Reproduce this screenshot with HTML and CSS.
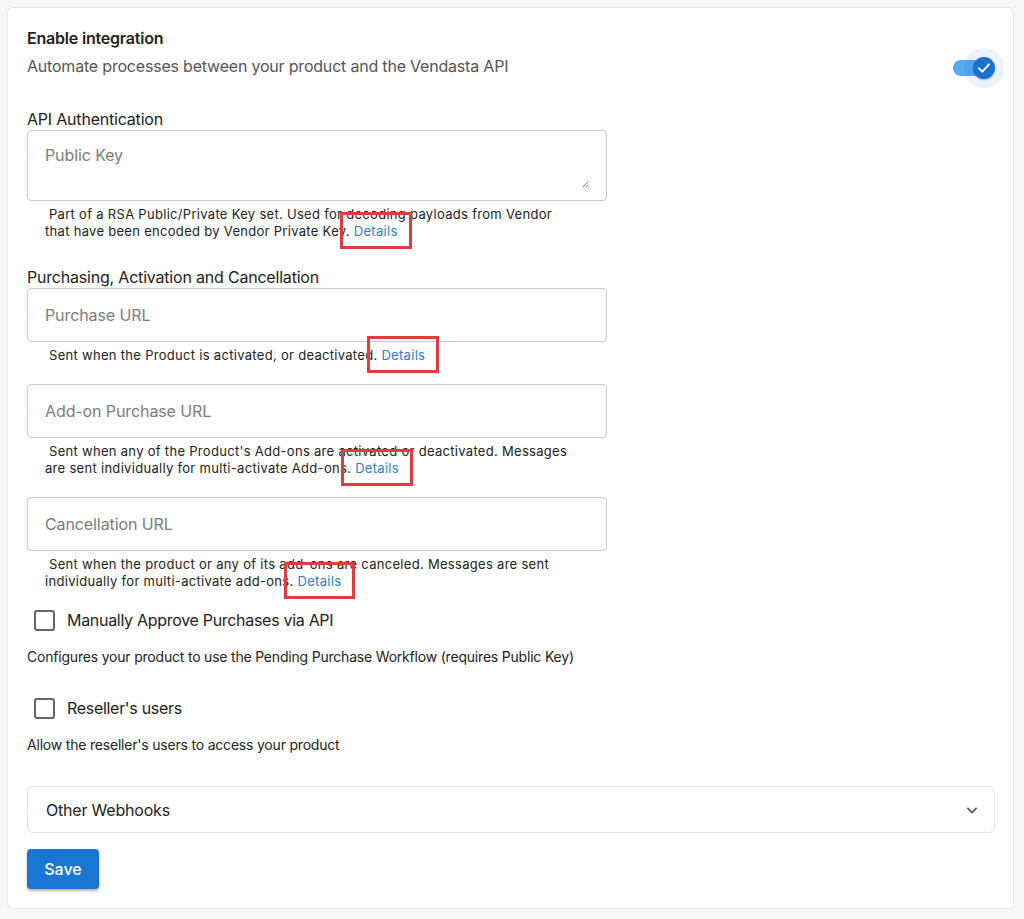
FILE: index.html
```html
<!DOCTYPE html>
<html lang="en">
<head>
    <meta charset="UTF-8">
    <meta name="viewport" content="width=device-width, initial-scale=1.0">
    <title>Integration Settings</title>
    <link rel="stylesheet" href="styles.css">
</head>
<body>
    <div class="card">
        <div class="header-row">
            <div>
                <div class="title">Enable integration</div>
                <div class="subtitle">Automate processes between your product and the Vendasta API</div>
            </div>
            <label class="toggle">
                <span class="track"></span>
                <span class="halo"></span>
                <span class="thumb">
                    <svg viewBox="0 0 24 24" width="16" height="16"><path d="M4.5 12.5l5 5 10-11" fill="none" stroke="#fff" stroke-width="3" stroke-linecap="round" stroke-linejoin="round"/></svg>
                </span>
            </label>
        </div>

        <h3 class="section-title first">API Authentication</h3>
        <div class="field textarea-field">
            <textarea placeholder="Public Key"></textarea>
            <svg class="resize" viewBox="0 0 10 10" width="9" height="9"><path d="M9 3L3 9M9 6.5L6.5 9" stroke="#666" stroke-width="1.1" fill="none"/></svg>
        </div>
        <p class="hint"><span class="lead"></span>Part of a RSA Public/Private Key set. Used for decoding payloads from Vendor that have been encoded by Vendor Private Key. <a href="#" class="details marked">Details</a></p>

        <h3 class="section-title">Purchasing, Activation and Cancellation</h3>
        <div class="field">
            <input type="text" placeholder="Purchase URL">
        </div>
        <p class="hint"><span class="lead"></span>Sent when the Product is activated, or deactivated. <a href="#" class="details marked">Details</a></p>

        <div class="field spaced">
            <input type="text" placeholder="Add-on Purchase URL">
        </div>
        <p class="hint"><span class="lead"></span>Sent when any of the Product's Add-ons are activated or deactivated. Messages are sent individually for multi-activate Add-ons. <a href="#" class="details marked">Details</a></p>

        <div class="field spaced">
            <input type="text" placeholder="Cancellation URL">
        </div>
        <p class="hint"><span class="lead"></span>Sent when the product or any of its add-ons are canceled. Messages are sent individually for multi-activate add-ons. <a href="#" class="details marked">Details</a></p>

        <label class="check-row first-check">
            <span class="box"></span>
            <span>Manually Approve Purchases via API</span>
        </label>
        <p class="check-desc">Configures your product to use the Pending Purchase Workflow (requires Public Key)</p>

        <label class="check-row">
            <span class="box"></span>
            <span>Reseller's users</span>
        </label>
        <p class="check-desc">Allow the reseller's users to access your product</p>

        <div class="panel">
            <span>Other Webhooks</span>
            <svg viewBox="0 0 24 24" width="20" height="20"><path d="M6.5 9.5l5.5 5.5 5.5-5.5" fill="none" stroke="#555" stroke-width="2"/></svg>
        </div>

        <button type="button" class="save-button">Save</button>
    </div>
</body>
</html>
```

FILE: styles.css
```css
body {
    margin: 0;
    background: #f6f6f6;
    font-family: Inter, "Noto Sans", Arial, sans-serif;
    color: #222;
}
.card {
    margin: 7px 10px 10px 7px;
    background: #fff;
    border: 1px solid #e6e6e6;
    border-radius: 6px;
    padding: 18px 18px 18px 19px;
    height: 864px;
}
.header-row {
    display: flex;
    justify-content: space-between;
    align-items: flex-start;
}
.title {
    font-weight: 600;
    font-size: 16px;
    line-height: 24px;
    letter-spacing: -0.2px;
}
.subtitle {
    margin-top: 4px;
    font-size: 16px;
    line-height: 24px;
    letter-spacing: -0.2px;
    color: #555;
}
.toggle {
    position: relative;
    width: 48px;
    height: 40px;
    margin-top: 22px;
    margin-right: -6px;
}
.track {
    position: absolute;
    left: 0;
    top: 12px;
    width: 34px;
    height: 16px;
    border-radius: 8px;
    background: #5aa8ee;
}
.halo {
    position: absolute;
    left: 11px;
    top: 0;
    width: 40px;
    height: 40px;
    border-radius: 50%;
    background: rgba(25, 118, 210, 0.09);
}
.thumb {
    position: absolute;
    left: 20px;
    top: 9px;
    width: 22px;
    height: 22px;
    border-radius: 50%;
    background: #1b6fcf;
    box-shadow: 0 1px 2px rgba(0, 0, 0, 0.25);
    display: flex;
    align-items: center;
    justify-content: center;
}
.section-title {
    margin: 0;
    font-size: 16px;
    font-weight: 400;
    line-height: 22px;
    letter-spacing: -0.2px;
    color: #222;
}
.section-title.first {
    margin-top: 20px;
}
.field {
    position: relative;
    width: 580px;
}
.field.spaced {
    margin-top: 20px;
}
.field input,
.field textarea {
    box-sizing: border-box;
    width: 100%;
    border: 1px solid #c8c8c8;
    border-radius: 4px;
    font-family: inherit;
    font-size: 16px;
    letter-spacing: -0.1px;
    color: #222;
    padding: 0 17px;
    outline: none;
    background: #fff;
}
.field input {
    height: 54px;
}
.field textarea {
    display: block;
    height: 71px;
    padding-top: 14px;
    resize: none;
}
.field input::placeholder,
.field textarea::placeholder {
    color: #7c7c7c;
}
.resize {
    position: absolute;
    right: 18px;
    bottom: 13px;
}
.hint {
    margin: 5px 0 0;
    padding: 0 18px;
    width: 530px;
    font-size: 13px;
    line-height: 17px;
    letter-spacing: 0.3px;
    color: #222;
}
.hint .lead {
    display: inline-block;
    width: 4px;
}
.details {
    color: #2d7dd2;
    text-decoration: none;
}
/* red review markers around the doc links */
.marked {
    position: relative;
}
.marked::after {
    content: "";
    position: absolute;
    left: -14px;
    right: -14px;
    top: -11px;
    bottom: -10px;
    border: 3px solid #e23a3f;
}
.hint + .section-title {
    margin-top: 26px;
}
.check-row {
    display: flex;
    align-items: center;
    gap: 12px;
    font-size: 16px;
    line-height: 22px;
    letter-spacing: -0.3px;
    color: #222;
    padding-left: 7px;
}
.first-check {
    margin-top: 19px;
}
.check-row + .check-desc {
    margin-top: 16px;
}
.box {
    box-sizing: border-box;
    width: 21px;
    height: 21px;
    border: 2px solid #666;
    border-radius: 3px;
}
.check-desc {
    margin: 0 0 30px;
    font-size: 14px;
    line-height: 20px;
    letter-spacing: -0.2px;
    color: #222;
}
.panel {
    margin-top: 31px;
    display: flex;
    justify-content: space-between;
    align-items: center;
    box-sizing: border-box;
    height: 47px;
    padding: 0 12px 0 18px;
    border: 1px solid #e3e3e3;
    border-radius: 6px;
    font-size: 16px;
    letter-spacing: -0.2px;
}
.save-button {
    display: block;
    margin-top: 16px;
    width: 72px;
    height: 40px;
    border: none;
    border-radius: 4px;
    background: #1976d2;
    color: #fff;
    font-family: inherit;
    font-size: 16px;
    font-weight: 500;
    box-shadow: 0 2px 3px rgba(0, 0, 0, 0.3);
    cursor: pointer;
}
```
